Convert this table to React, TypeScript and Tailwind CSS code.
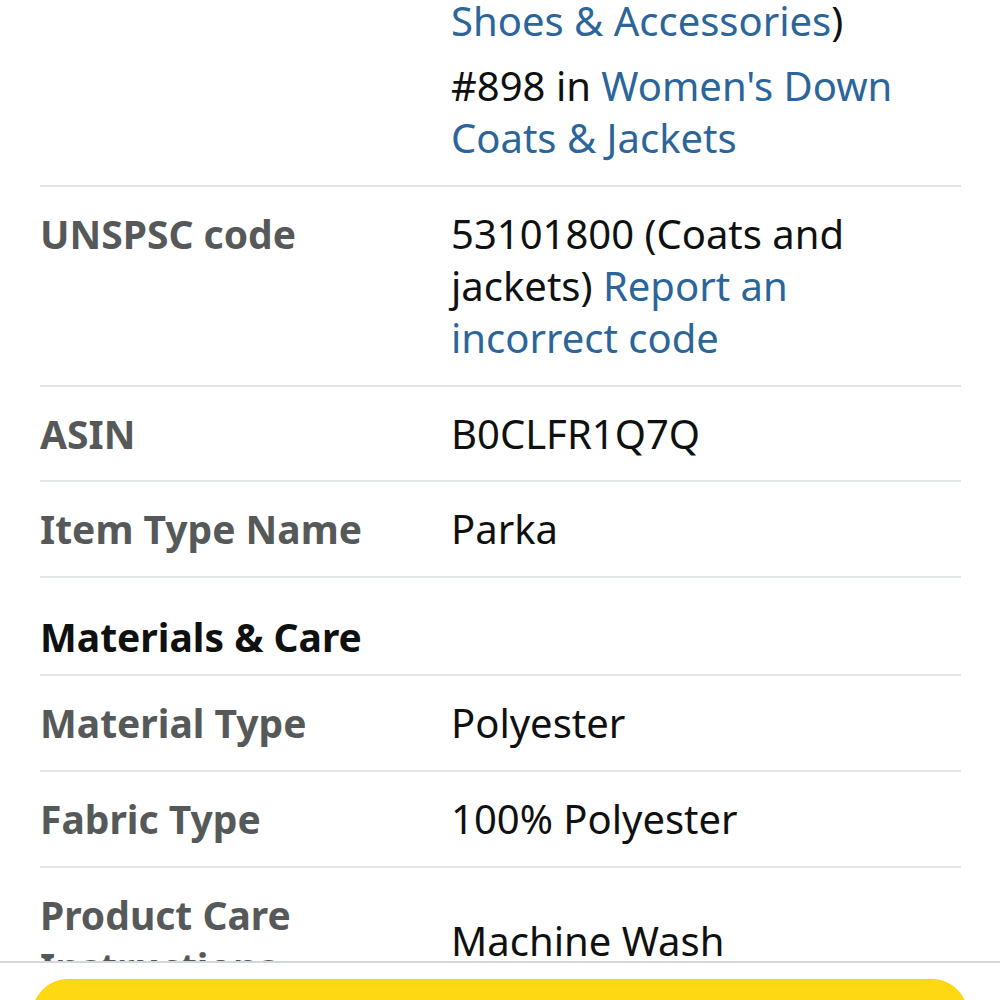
import type { ReactNode } from "react";

function Row({ label, children, className = "" }: { label?: ReactNode; children?: ReactNode; className?: string }) {
  return (
    <div className={`grid grid-cols-[411px_1fr] items-center border-b-2 border-[#e3e6e6] py-[21px] ${className}`}>
      <div className="text-[39px] font-bold text-[#565959]">{label}</div>
      <div className="text-[#0f1111]">{children}</div>
    </div>
  );
}

function Link({ children }: { children: ReactNode }) {
  return <span className="text-[#2b659a]">{children}</span>;
}

export default function App() {
  return (
    <div className="relative h-[1000px] w-[1000px] overflow-hidden bg-white font-['Noto_Sans',sans-serif] text-[40px] leading-[52px]">
      <div className="-mt-[26px] pl-[40px] pr-[39px]">
        {/* Best Sellers Rank (tail) */}
        <Row className="items-start pt-[21px]">
          <p>
            <Link>Shoes &amp; Accessories</Link>)
          </p>
          <p className="mt-[13px]">
            #898 in <Link>Women's Down</Link>
            <br />
            <Link>Coats &amp; Jackets</Link>
          </p>
        </Row>

        <Row label="UNSPSC code" className="items-start">
          53101800 (Coats and
          <br />
          jackets) <Link>Report an</Link>
          <br />
          <Link>incorrect code</Link>
        </Row>

        <Row label="ASIN" className="pb-[20px]">B0CLFR1Q7Q</Row>
        <Row label="Item Type Name">Parka</Row>

        <div className="border-b-2 border-[#e3e6e6] pt-[33px] pb-[11px] text-[39px] font-bold text-[#0f1111]">
          Materials &amp; Care
        </div>

        <Row label="Material Type">Polyester</Row>
        <Row label="Fabric Type">100% Polyester</Row>
        <Row
          label={
            <>
              Product Care
              <br />
              Instructions
            </>
          }
        >
          Machine Wash
        </Row>
      </div>

      {/* sticky buy bar */}
      <div className="absolute inset-x-0 top-[961px] h-[80px] border-t-2 border-[#d5d9d9] bg-white px-[32px] pt-[16px]">
        <div className="h-[72px] rounded-[36px] border border-[#fcd200] bg-[#ffd814]" />
      </div>
    </div>
  );
}
